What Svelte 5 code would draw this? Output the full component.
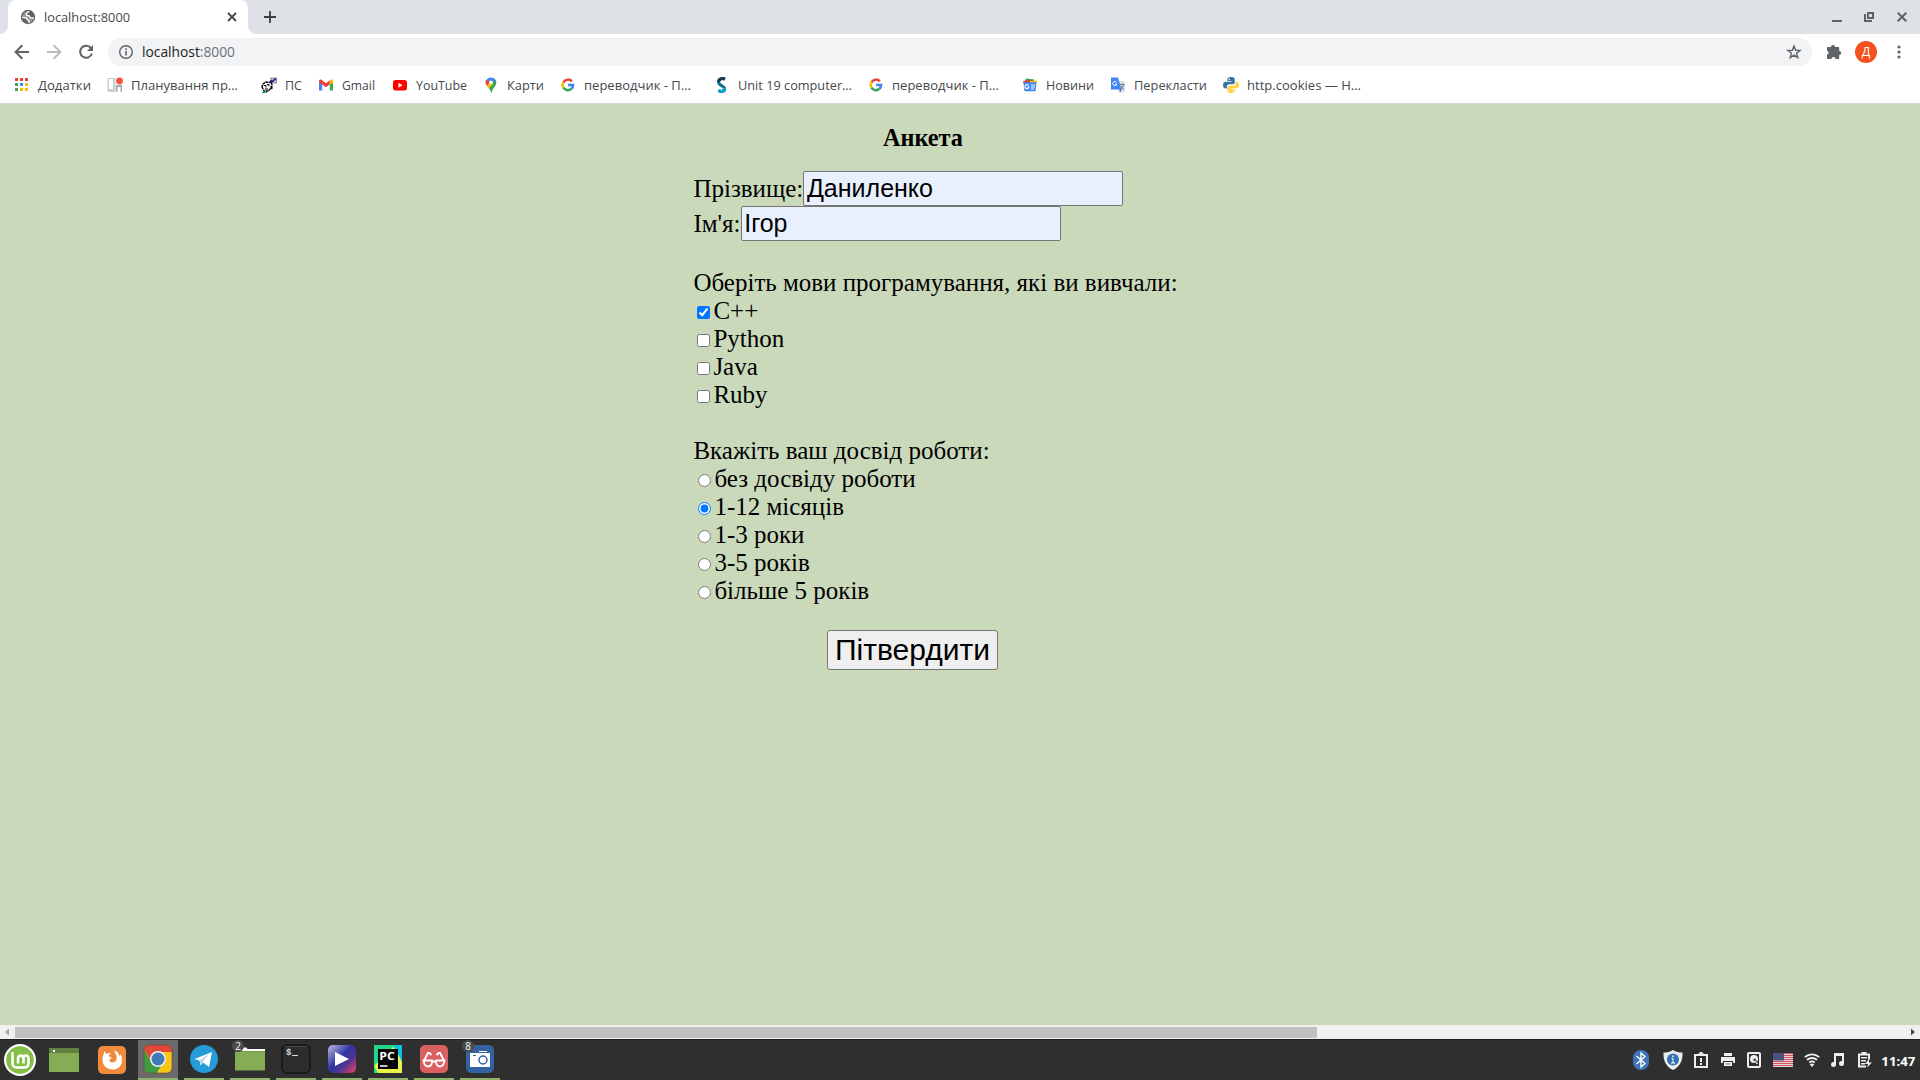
<script>
  const bookmarks = [
    { icon: 'apps', text: 'Додатки', width: 53, slot: 93 },
    { icon: 'plan', text: 'Планування пр…', width: 107, slot: 154 },
    { icon: 'pc', text: 'ПС', width: 17, slot: 57 },
    { icon: 'gmail', text: 'Gmail', width: 33, slot: 74 },
    { icon: 'youtube', text: 'YouTube', width: 51, slot: 91 },
    { icon: 'maps', text: 'Карти', width: 37, slot: 77 },
    { icon: 'google', text: 'переводчик - П…', width: 107, slot: 154 },
    { icon: 'unit', text: 'Unit 19 computer…', width: 114, slot: 154 },
    { icon: 'google', text: 'переводчик - П…', width: 107, slot: 154 },
    { icon: 'news', text: 'Новини', width: 48, slot: 88 },
    { icon: 'translate', text: 'Перекласти', width: 73, slot: 113 },
    { icon: 'python', text: 'http.cookies — Н…', width: 114, slot: 154 }
  ];
  const appColors = ['#ea4335', '#ea4335', '#ea4335', '#34a853', '#4285f4', '#fbbc04', '#34a853', '#fbbc04', '#fbbc04'];
  const languages = ['C++', 'Python', 'Java', 'Ruby'];
  const experience = ['без досвіду роботи', '1-12 місяців', '1-3 роки', '3-5 років', 'більше 5 років'];
  const tasks = ['chrome', 'telegram', 'folder', 'terminal', 'player', 'pycharm', 'glasses', 'camera'];
</script>

{#snippet label(text, width)}
  <svg class="label" {width} height="18"><text x="0" y="13.5" textLength={width} lengthAdjust="spacingAndGlyphs">{text}</text></svg>
{/snippet}

{#snippet bookmarkIcon(name)}
  <svg width="16" height="16" viewBox="0 0 16 16">
    {#if name === 'apps'}
      {#each appColors as color, i}
        <rect x={1 + (i % 3) * 5} y={1 + Math.floor(i / 3) * 5} width="3" height="3" fill={color} />
      {/each}
    {:else if name === 'plan'}
      <rect x="0.5" y="1" width="8" height="14" rx="1" fill="#c9cdd4" />
      <rect x="2" y="2" width="4" height="10" fill="#fff" />
      <path d="M9 8h6v7h-1.500v-5h-3v5H9z" fill="#a3a9b4" />
      <circle cx="12.500" cy="4" r="3.400" fill="#f2553d" />
    {:else if name === 'pc'}
      <path d="M9.500 1h6v5h-4z" fill="#b8bcc8" stroke="#555" stroke-width="0.600" />
      <path d="M10 5.500l5-4M10 5v-2" stroke="#10108a" stroke-width="1.500" />
      <path d="M1 10l1-3 3-2 5 .5 1 2-1 3.500-3 3H3z" fill="#fff" stroke="#000" stroke-width="1.400" stroke-dasharray="2.500 .6" />
      <path d="M3 8.500h2v2M6 7.500h2v2M4 12h3M9 11l2 1v-3" fill="none" stroke="#000" />
      <path d="M1 15.500h5" stroke="#0aa" />
    {:else if name === 'gmail'}
      <path d="M1 4v9.500h3.200V7z" fill="#4285f4" />
      <path d="M11.800 7v6.500H15V4z" fill="#34a853" />
      <path d="M11.800 4v4L15 5.500V4c0-1.700-1.500-2-2.400-1.200z" fill="#fbbc04" />
      <path d="M1 4c0-1.700 1.500-2 2.400-1.200L8 6.200l3.800-2.900V7.500L8 10.300 1 5.200z" fill="#ea4335" />
    {:else if name === 'youtube'}
      <rect x="1" y="3" width="14" height="10.500" rx="2.500" fill="#f00" />
      <path d="M6.500 5.800v5l4-2.500z" fill="#fff" />
    {:else if name === 'maps'}
      <path d="M3 3.500C5-.5 11-.5 13 3.500L8 8z" fill="#4285f4" />
      <path d="M3 3c-1 2-.5 4 .8 5.700L8 5z" fill="#ea4335" />
      <path d="M3.800 8.700L12.800 3c1 2.500.5 4.500-1 6.500-2 2.500-2.600 4-3 6H8c-.5-3-2-4-4.200-6.800z" fill="#34a853" />
      <path d="M3.800 8.700L8 4.500l2 2.500-4 4.500z" fill="#fbbc04" />
      <circle cx="8" cy="5.300" r="1.900" fill="#fff" />
    {:else if name === 'google'}
      <g fill="none" stroke-width="2.500">
        <path d="M3.500 5.300A5.100 5.100 0 0 1 11.800 4.300" stroke="#ea4335" />
        <path d="M3.500 5.300A5.100 5.100 0 0 0 3.500 10.700" stroke="#fbbc04" />
        <path d="M3.500 10.700A5.100 5.100 0 0 0 11.500 11.700" stroke="#34a853" />
        <path d="M8 8h5.100c0 1.500-.5 2.800-1.600 3.700" stroke="#4285f4" />
      </g>
    {:else if name === 'unit'}
      <path d="M11 2.200C8 .8 4.600 2 4.600 5c0 4 6 3.500 6 7 0 2.500-3.200 3-6.200 1.600" fill="none" stroke="#0a6d96" stroke-width="3" />
      <path d="M10.600 11c0 3-3.200 3.800-6.200 2.600" fill="none" stroke="#08a5d5" stroke-width="3" />
      <path d="M11 2.200C8 .8 4.600 2 4.600 5" fill="none" stroke="#123a55" stroke-width="3" />
    {:else if name === 'news'}
      <path d="M3 4l1-2.500 8 1V6H3z" fill="#34a853" />
      <path d="M1 4l8-1.200V7H2z" fill="#ea4335" />
      <path d="M8 4l7-.5-1 4H8z" fill="#fbbc04" />
      <path d="M1.500 5.200h13l-1 9h-11z" fill="#4285f4" />
      <path d="M6.500 8.300A2 2 0 1 0 7 10H5.300M9 8h4M9 10h4M9 12h3" fill="none" stroke="#fff" stroke-width="1.100" />
    {:else if name === 'translate'}
      <path d="M6 4h9v11.500H9z" fill="#dcdfe3" />
      <path d="M1 .5h7l3.500 12H1z" fill="#4285f4" />
      <path d="M9.500 12.500h2l-1.500 3z" fill="#1a56c4" />
      <path d="M6.400 5.300A2 2 0 1 0 6.800 7H5" fill="none" stroke="#fff" />
      <path d="M10 7.500h4.500M12.200 6.500v1M13.500 8c-.5 2-1.500 3.500-3 4.500M11 9c.5 1.500 1.500 2.500 3 3.300" fill="none" stroke="#607d8b" />
    {:else}
      <path d="M8 0C5 0 4.500 1 4.500 2.500V4H8.500v.8H2.500C1 4.800 0 6 0 8.200c0 2 1 3.300 2.500 3.300H4V9.500C4 8 5 7.300 6.500 7.300h3.300c1.200 0 2-.8 2-2V2.500C11.800.8 10.500 0 8 0z" fill="#3773a5" />
      <path d="M8.300 16c3 0 3.500-1 3.500-2.500V12H7.800v-.8h6c1.500 0 2.200-1.200 2.200-3.400 0-2-1-3.300-2.500-3.300h-.8v2c0 1.500-1 2.300-2.500 2.300H6.800c-1.200 0-2.300.8-2.300 2v2.700c0 1.700 1.300 2.500 3.800 2.500z" fill="#ffd040" />
      <circle cx="6.300" cy="2.200" r=".8" fill="#fff" /><circle cx="10" cy="13.800" r=".8" fill="#fff" />
    {/if}
  </svg>
{/snippet}

{#snippet taskIcon(name)}
  <svg width="30" height="30" viewBox="0 0 30 30">
    {#if name === 'chrome'}
      <clipPath id="tile"><rect x="1" y="1" width="28" height="28" rx="5" /></clipPath>
      <g clip-path="url(#tile)">
        <rect width="30" height="30" fill="#f5c518" />
        <path d="M0 0h30v8H15L9 18 1 6z" fill="#e0483c" />
        <path d="M0 4l9 15 9 3-5 8H0z" fill="#3f9c43" />
      </g>
      <circle cx="15" cy="15" r="8" fill="#f0f0f0" /><circle cx="15" cy="15" r="6.500" fill="#3d7ab8" />
      <rect x="1" y="1" width="28" height="28" rx="5" fill="none" stroke="#5c3a2e" stroke-opacity=".5" />
    {:else if name === 'telegram'}
      <circle cx="15" cy="15" r="14" fill="#259bd8" />
      <path d="M5.500 15L23 8l-3 15-6-4.500-2.500 3-1-5z" fill="#fff" />
      <path d="M10.500 16.500L20 10l-6.500 8-2 3.500z" fill="#b9d4e6" />
    {:else if name === 'folder'}
      <path d="M0 6V3.500h11.500l1 1.500H30v3H0z" fill="#fff" />
      <rect x="0" y="7" width="30" height="19.500" rx="1" fill="#87ad54" />
      <path d="M0 7.500h30" stroke="#769a48" />
    {:else if name === 'terminal'}
      <rect x="1" y="1" width="28" height="28" rx="5" fill="#2c2c2c" stroke="#141414" stroke-width="1.500" />
      <path d="M4 2.500h22" stroke="#4b4b4b" />
      <text x="5" y="11" class="mono">$</text><path d="M11 11.500h6" stroke="#ddd" />
    {:else if name === 'player'}
      <linearGradient id="violet" x1="0" y1="0" x2="1" y2="1">
        <stop offset="0" stop-color="#c4bce0" /><stop offset=".45" stop-color="#2d35a2" /><stop offset=".65" stop-color="#4c3490" /><stop offset="1" stop-color="#ef4365" />
      </linearGradient>
      <rect x="1" y="1" width="28" height="28" rx="5" fill="url(#violet)" />
      <path d="M8 8v14l14-7z" fill="#fff" />
    {:else if name === 'pycharm'}
      <rect x="1" y="1" width="28" height="28" fill="#21d789" />
      <path d="M22 1h7v16l-6-2z" fill="#0bbfe8" />
      <path d="M1 22L20 3l3 3 6 12v11H5z" fill="#eaf34a" />
      <path d="M1 1h17L1 19z" fill="#21d789" />
      <rect x="5" y="5" width="20" height="20" fill="#050505" />
      <text x="6.300" y="15.500" class="pc" textLength="15.500" lengthAdjust="spacingAndGlyphs">PC</text><path d="M7 22h7.500" stroke="#fff" stroke-width="1.500" />
    {:else if name === 'glasses'}
      <rect x="1" y="1" width="28" height="28" rx="5" fill="#d9605f" />
      <g fill="none" stroke="#fff" stroke-width="1.900">
        <path d="M5 16.500h8c.5 4-1.500 6-4 6s-4.500-2.500-4-6zM17 16.500h8c.5 3.500-1.500 6-4 6s-4.500-2-4-6zM13 17.500h4M5 16.500l4-7.500h1.500l2 2M25 16.500l-4-7.500h-1.500l-2 2M3.500 16.500H5M25 16.500h1.500" />
      </g>
    {:else}
      <rect x="1" y="1" width="28" height="28" rx="5" fill="#3461a0" />
      <path d="M5 9h20v14H5zM14 7h8v1h-8z" fill="#fff" />
      <path d="M8 11.500h3" stroke="#3461a0" />
      <circle cx="18" cy="16" r="4" fill="#fff" stroke="#3461a0" stroke-width="1.500" />
    {/if}
  </svg>
{/snippet}

<div class="screen">
  <div class="tabstrip">
    <div class="tab">
      <svg width="16" height="16" viewBox="0 0 16 16"><circle cx="8" cy="8" r="7.200" fill="#5f6368" /><path d="M9.200 2.300L6.500 4.300v1.900l2.700.6.800 1.900 3.800.3c-.3 2.500-2.300 4.500-5 4.900l.4-2-1.900-1.200-.8-1.700-4.300-.8c0-.8.100-1.400.3-2l1.500-2.200C5.500 2.700 7.300 2 9.200 2.300z" fill="#fff" opacity=".35" /><path d="M9.200 2.300L6.500 4.300v1.900l2.700.6.800 1.900 3.800.3M2.200 8.300l4.300.8.800 1.700 1.900 1.200-.4 2" fill="none" stroke="#fff" stroke-width="1.300" /></svg>
      {@render label('localhost:8000', 86)}
      <svg class="tab-close" width="10" height="10" viewBox="0 0 10 10"><path d="M1 1l8 8M9 1L1 9" stroke="#45494d" stroke-width="1.800" /></svg>
    </div>
    <svg class="new-tab" width="12" height="12" viewBox="0 0 12 12"><path d="M6 0v12M0 6h12" stroke="#3c4043" stroke-width="1.800" /></svg>
    <div class="window-controls">
      <svg width="10" height="12" viewBox="0 0 10 12"><path d="M0 10h10" stroke="#5f6368" stroke-width="2" /></svg>
      <svg width="10" height="12" viewBox="0 0 10 12"><path d="M4 2h5v5H4zM1 3v7h7" fill="none" stroke="#5f6368" stroke-width="2" /></svg>
      <svg width="10" height="12" viewBox="0 0 10 12"><path d="M.7 1.700l8.600 8.600M9.300 1.700L.7 10.300" stroke="#5f6368" stroke-width="2" /></svg>
    </div>
  </div>

  <div class="toolbar">
    <svg width="16" height="16" viewBox="0 0 16 16"><path d="M15 8H2M8.300 1.300L1.600 8l6.700 6.700" fill="none" stroke="#5f6368" stroke-width="2" /></svg>
    <svg width="16" height="16" viewBox="0 0 16 16"><path d="M1 8h13M7.700 1.300L14.400 8l-6.700 6.700" fill="none" stroke="#babcbe" stroke-width="2" /></svg>
    <svg width="16" height="16" viewBox="0 0 16 16"><path d="M13 4.200A6 6 0 1 0 13.900 9.500" fill="none" stroke="#5f6368" stroke-width="2" /><path d="M15 1v6H9z" fill="#5f6368" /></svg>
    <div class="omnibox">
      <svg width="16" height="16" viewBox="0 0 16 16"><circle cx="8" cy="8" r="6.300" fill="none" stroke="#5f6368" stroke-width="1.400" /><path d="M8 7v4.500M8 4.300v1.600" stroke="#5f6368" stroke-width="1.600" /></svg>
      <svg class="url" width="93" height="20"><text x="0" y="15" textLength="93" lengthAdjust="spacingAndGlyphs">localhost<tspan fill="#6e7276">:8000</tspan></text></svg>
      <svg class="star" width="16" height="16" viewBox="0 0 16 16"><path d="M8 2l1.600 4.200 4.500.2-3.500 2.800 1.200 4.400L8 11.100l-3.800 2.500 1.200-4.400L1.900 6.400l4.500-.2z" fill="none" stroke="#5f6368" stroke-width="1.400" /></svg>
    </div>
    <svg class="puzzle" width="16" height="16" viewBox="0 0 16 16"><path d="M5 3a2 2 0 0 1 4 0h3.200c.6 0 1 .4 1 1v3a2 2 0 0 1 0 4v3c0 .6-.4 1-1 1H9.500a2 2 0 0 0-4 0H2c-.6 0-1-.4-1-1v-3.300a2 2 0 0 0 0-3.900V4c0-.6.400-1 1-1z" fill="#5f6368" /></svg>
    <div class="avatar">Д</div>
    <svg class="menu" width="4" height="14" viewBox="0 0 4 14"><circle cx="2" cy="2" r="1.600" fill="#5f6368" /><circle cx="2" cy="7" r="1.600" fill="#5f6368" /><circle cx="2" cy="12" r="1.600" fill="#5f6368" /></svg>
  </div>

  <div class="bookmarks">
    {#each bookmarks as b}
      <div class="bookmark" style:width="{b.slot}px">
        {@render bookmarkIcon(b.icon)}
        {@render label(b.text, b.width)}
      </div>
    {/each}
  </div>

  <main class="page">
    <form>
      <h3>Анкета</h3>
      <div class="field">Прізвище:<input type="text" value="Даниленко" /></div>
      <div class="field">Ім'я:<input type="text" value="Ігор" /></div>
      <div class="group">
        <div class="row">Оберіть мови програмування, які ви вивчали:</div>
        {#each languages as name, i}
          <label class="row"><input type="checkbox" checked={i === 0} />{name}</label>
        {/each}
      </div>
      <div class="group">
        <div class="row">Вкажіть ваш досвід роботи:</div>
        {#each experience as name, i}
          <label class="row"><input type="radio" name="experience" checked={i === 1} />{name}</label>
        {/each}
      </div>
      <button type="button">Пітвердити</button>
    </form>
  </main>

  <div class="scrollbar">
    <svg width="15" height="14" viewBox="0 0 15 14"><path d="M9 3.500v7L5 7z" fill="#a3a3a3" /></svg>
    <div class="thumb"></div>
    <svg class="right" width="15" height="14" viewBox="0 0 15 14"><path d="M6 3.500v7L10 7z" fill="#505050" /></svg>
  </div>

  <div class="taskbar">
    <div class="launchers">
      <svg width="32" height="32" viewBox="0 0 32 32"><circle cx="16" cy="16" r="16" fill="#fff" /><circle cx="16" cy="16" r="13.800" fill="#86be43" /><path d="M8.500 8v11c0 3 1.500 4.500 4.500 4.500h7c3 0 4.500-1.500 4.500-4.500v-4c0-4.500-5-4.500-5-.5v5M19.500 15c0-4.500-5.500-4.500-5.500 0v4.500" fill="none" stroke="#fff" stroke-width="2.600" /></svg>
      <svg width="30" height="24" viewBox="0 0 30 24"><rect width="30" height="24" fill="#87ad54" /><rect width="30" height="5" fill="#648040" /><rect x="4" y="2" width="2" height="2" fill="#fff" /></svg>
      <svg width="30" height="30" viewBox="0 0 30 30"><rect x="1" y="1" width="28" height="28" rx="5" fill="#f28a3c" /><path d="M7 6l2.500 3c2-1 3-1.200 4.500-.5-2 .8-2.500 2-2 3l2.500 1c-.5 2-2.500 1.500-2 3.500 1.500 2.500 5.500 1.500 6.500-.5 2-4-.5-7-2-10 4.500 1.500 5 4 5.500 6l.7-2.500c2.300 3 2.300 6.500 1.300 9.500-1.500 4-5 6-9 6-5.500 0-10-4-10-9.500 0-3.500 1.200-6 2-9z" fill="#fff" /></svg>
    </div>
    <div class="tasks">
      {#each tasks as name, i}
        <div class="task" class:active={i === 0}>
          {@render taskIcon(name)}
          {#if name === 'folder' || name === 'camera'}
            <span class="badge">{name === 'folder' ? 2 : 8}</span>
          {/if}
        </div>
      {/each}
    </div>
    <div class="tray">
      <svg width="16" height="20" viewBox="0 0 16 20"><rect width="16" height="20" rx="7.500" fill="#3d74b8" /><path d="M3.500 6l8.500 7.500L8 17V3l4 3.500L3.500 14" fill="none" stroke="#fff" stroke-width="1.400" /></svg>
      <svg class="shield" width="20" height="20" viewBox="0 0 20 20"><path d="M10 0c3 2 6 2.500 9.500 2.500C20 10 17 17 10 20 3 17 0 10 .5 2.500 4 2.500 7 2 10 0z" fill="#e9ece9" /><circle cx="10" cy="9.500" r="6" fill="#3373b5" /><path d="M8.500 8.500H10v4.500M8 13h4" fill="none" stroke="#fff" /><rect x="9.200" y="5.500" width="1.500" height="1.500" fill="#fff" /></svg>
      <svg class="clip" width="14" height="16" viewBox="0 0 14 16"><path d="M1 3h12v12H1z" fill="none" stroke="#eee" stroke-width="2" /><path d="M4 1.500h1.500V0h3v1.500H10V4H4zM6 6h2v4H6zM6 11h2v2H6z" fill="#eee" /></svg>
      <svg class="printer" width="14" height="14" viewBox="0 0 14 14"><path d="M3 0h8v3H3zM0 4h14v6h-2V8H2v2H0zM3 9h8v4H3z" fill="#eee" /><path d="M4.500 11h5" stroke="#777" /></svg>
      <svg class="disk" width="14" height="16" viewBox="0 0 14 16"><rect x="1" y="1" width="12" height="14" rx="1" fill="none" stroke="#eee" stroke-width="2" /><circle cx="7" cy="7" r="4" fill="#eee" /><path d="M7 7l3.500 5" stroke="#2f2f2f" stroke-width="2.400" /><path d="M7.500 8.500l3 3.500" stroke="#eee" stroke-width="1.200" /></svg>
      <svg class="flag" width="20" height="14" viewBox="0 0 20 14"><rect width="20" height="14" fill="#e9e4e4" />{#each [0, 1, 2, 3, 4, 5, 6] as i}<rect y={i * 2} width="20" height="1.100" fill="#d0545a" />{/each}<rect width="11" height="7.500" fill="#4b5480" /></svg>
      <svg class="wifi" width="16" height="14" viewBox="0 0 16 14"><path d="M.8 4.200a10.500 10.500 0 0 1 14.400 0M3 6.900a7.500 7.500 0 0 1 10 0M5.300 9.500a4.200 4.200 0 0 1 5.400 0" fill="none" stroke="#eee" stroke-width="1.800" /><path d="M8 14l-2.300-2.400a3.300 3.300 0 0 1 4.600 0z" fill="#eee" /></svg>
      <svg class="music" width="13" height="14" viewBox="0 0 13 14"><path d="M4 11V1h8v9M4 2h8" fill="none" stroke="#eee" stroke-width="2" /><circle cx="2.500" cy="11.500" r="2.500" fill="#eee" /><circle cx="10.500" cy="10.500" r="2.500" fill="#eee" /></svg>
      <svg class="battery" width="14" height="16" viewBox="0 0 14 16"><path d="M8 14.500H1V2.500h10v5" fill="none" stroke="#eee" stroke-width="2" /><path d="M3.500 0h5v2h-5zM3 5h6v1.600H3zM3 8h5v1.600H3zM3 11h4v1.600H3zM11 7l-4 5h3l-1 3.500 5-5h-3z" fill="#eee" /></svg>
      <svg class="clock" width="34" height="18"><text x="-0.7" y="14.500" textLength="34" lengthAdjust="spacingAndGlyphs">11:47</text></svg>
    </div>
  </div>
</div>

<style>
  :global(body) { margin: 0; overflow: hidden; }
  .screen { width: 1920px; height: 1080px; display: flex; flex-direction: column; overflow: hidden; background: #fff; }
  svg { flex: none; display: block; }
  .label text { font: 12.5px "Open Sans", "Noto Sans", sans-serif; fill: #45494d; }
  .label, .url, .clock { overflow: visible; }

  .tabstrip { height: 34px; flex: none; box-sizing: border-box; background: #dee1e6; display: flex; align-items: center; padding: 0 13px 0 8px; }
  .tab { width: 240px; height: 34px; box-sizing: border-box; padding: 0 11px 0 12px; display: flex; align-items: center; gap: 8px; background: #fff; border-radius: 8px 8px 0 0; position: relative; }
  .tab::before, .tab::after { content: ''; position: absolute; bottom: 0; width: 8px; height: 8px; }
  .tab::before { left: -8px; background: radial-gradient(circle at 0 0, #dee1e6 7.5px, #fff 8px); }
  .tab::after { right: -8px; background: radial-gradient(circle at 100% 0, #dee1e6 7.5px, #fff 8px); }
  .tab-close { margin-left: auto; }
  .new-tab { margin-left: 16px; }
  .window-controls { margin-left: auto; display: flex; gap: 23px; }
  .window-controls svg:first-child { margin-right: -1px; }

  .toolbar { height: 36px; flex: none; box-sizing: border-box; display: flex; align-items: center; padding: 0 19px 0 14px; gap: 16px; }
  .omnibox { height: 28px; flex: 1; margin-left: -2px; box-sizing: border-box; padding: 0 10px; border-radius: 14px; background: #f1f3f4; display: flex; align-items: center; gap: 8px; }
  .url text { font: 14px "Open Sans", "Noto Sans", sans-serif; fill: #202124; }
  .star { margin-left: auto; }
  .puzzle { margin-left: -2px; }
  .avatar { width: 22px; height: 22px; border-radius: 50%; background: #f4511e; color: #fff; font: 12.5px/21px "Open Sans", sans-serif; text-align: center; margin-left: -3px; }
  .menu { margin-left: 4px; }

  .bookmarks { height: 33px; flex: none; display: flex; align-items: flex-start; padding-left: 14px; border-bottom: 1px solid #d5dacd; }
  .bookmark { flex: none; height: 30px; display: flex; align-items: center; gap: 8px; }

  .page { height: 921px; flex: none; overflow: hidden; background: #cbd9bb; color: #000; font: 25px/28px "Liberation Serif", serif; }
  form { margin-left: 693.4px; width: 620px; display: flex; flex-direction: column; align-items: flex-start; }
  h3 { margin: 20px 0 19px; width: 459px; text-align: center; font-size: 24.2px; line-height: 28px; }
  .field { height: 35px; display: flex; align-items: baseline; }
  .field input { width: 320px; height: 35px; box-sizing: border-box; margin: 0; padding: 1px 2px 1px 2.7px; border: 1px solid #767676; border-radius: 2px; background: #e8f0fe; color: #000; font: 25px "Liberation Sans", sans-serif; }
  .group { padding-top: 28px; }
  .row { display: block; height: 28px; white-space: nowrap; }
  button { margin: 25px 0 0 133.6px; width: 171px; height: 40px; box-sizing: border-box; padding: 0; border: 1px solid #767676; border-radius: 3px; background: #efefef; color: #000; font: 30px "Liberation Sans", sans-serif; }

  .scrollbar { height: 14px; flex: none; display: flex; align-items: center; background: #f0f0f0; }
  .thumb { width: 1302px; height: 11px; background: #c1c1c1; }
  .right { margin-left: auto; }

  .taskbar { height: 41px; flex: none; box-sizing: border-box; border-top: 1px solid #1f2223; background: #2f2f2f; display: flex; align-items: center; }
  .launchers { width: 138px; box-sizing: border-box; padding-left: 4px; display: flex; align-items: center; }
  .launchers svg:nth-child(2) { margin: 0 18px 0 13px; }
  .tasks { display: flex; gap: 6px; }
  .task { position: relative; width: 40px; height: 40px; box-sizing: border-box; border-bottom: 2px solid #8fb36a; display: flex; justify-content: center; padding-top: 4px; }
  .active { background: #6b6b6b; }
  .badge { position: absolute; left: 2px; top: 0; width: 12px; height: 12px; border-radius: 6px; background: #4a4a4a; color: #eee; font: 10px/12px "Noto Sans", sans-serif; text-align: center; }
  .tray { margin-left: auto; padding-right: 4px; display: flex; align-items: center; }
  .shield { margin-left: 14px; }
  .clip { margin-left: 11px; }
  .printer, .disk { margin-left: 13px; }
  .disk { margin-left: 12px; }
  .flag { margin-left: 12px; }
  .wifi { margin-left: 11px; }
  .music { margin-left: 11px; }
  .battery { margin-left: 14px; }
  .clock { margin-left: 10px; }
  .clock text { font: bold 12.5px "Noto Sans", sans-serif; fill: #fff; }
  .mono { font: bold 9px "Liberation Mono", monospace; fill: #ddd; }
  .pc { font: bold 11px "Open Sans", sans-serif; fill: #fff; }
</style>
